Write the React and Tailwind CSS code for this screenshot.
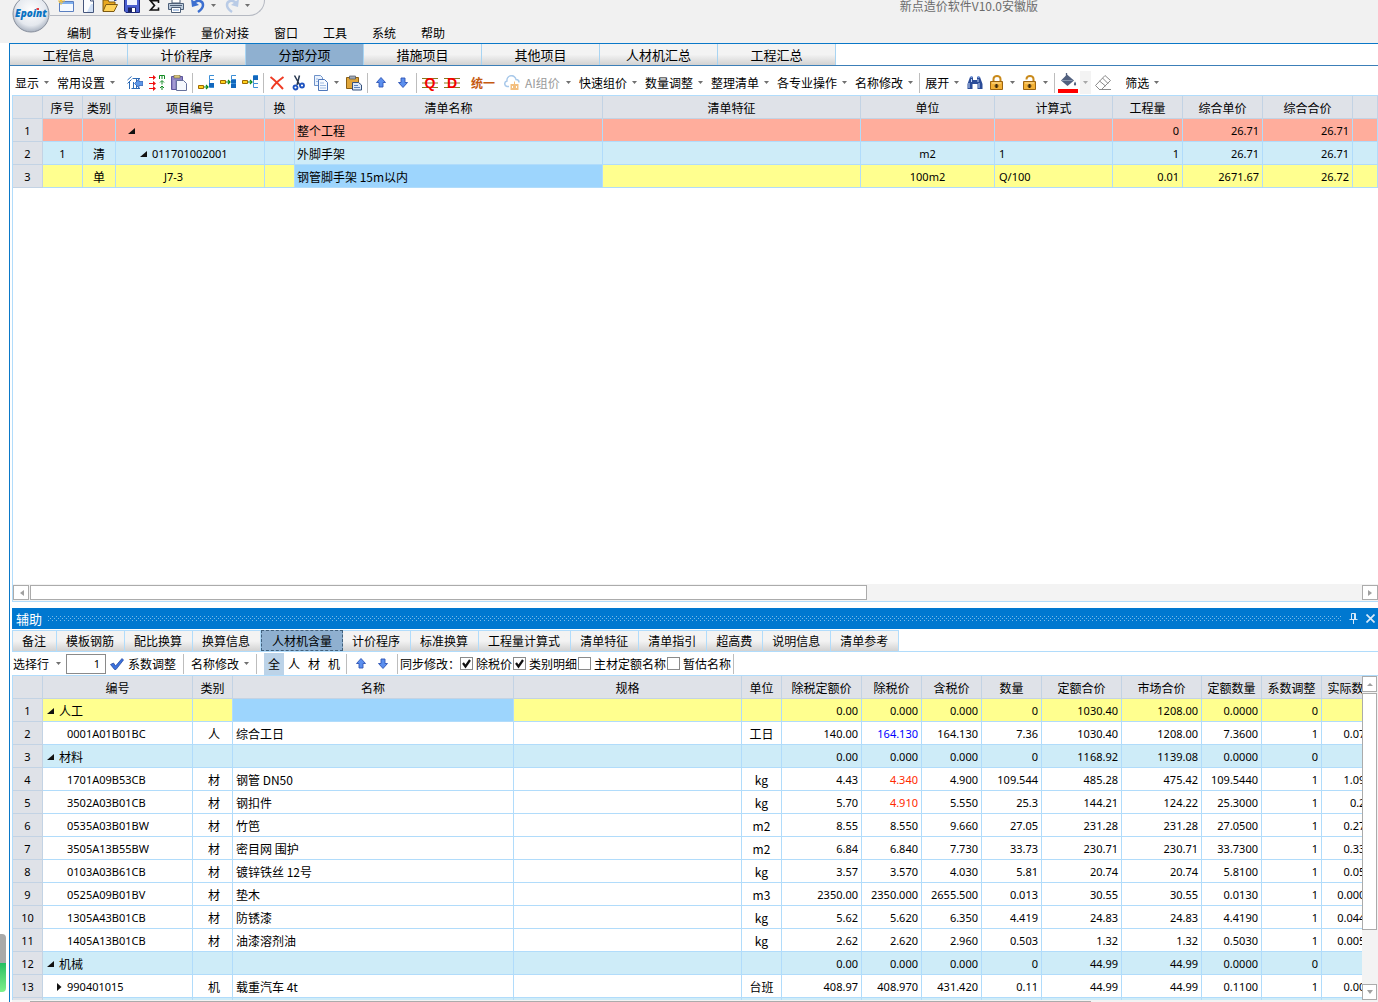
import React from "react";
import clsx from "clsx";

const MENUS = ["编制", "各专业操作", "量价对接", "窗口", "工具", "系统", "帮助"];

const MAIN_TABS = ["工程信息", "计价程序", "分部分项", "措施项目", "其他项目", "人材机汇总", "工程汇总"];

const DETAIL_TABS = [
    "备注", "模板钢筋", "配比换算", "换算信息", "人材机含量", "计价程序", "标准换算",
    "工程量计算式", "清单特征", "清单指引", "超高费", "说明信息", "清单参考",
];

const BILL_COLUMNS = [
    { title: "", width: "w-[30px]" },
    { title: "序号", width: "w-[40px]" },
    { title: "类别", width: "w-[33px]" },
    { title: "项目编号", width: "w-[149px]" },
    { title: "换", width: "w-[30px]" },
    { title: "清单名称", width: "w-[308px]" },
    { title: "清单特征", width: "w-[258px]" },
    { title: "单位", width: "w-[134px]" },
    { title: "计算式", width: "w-[118px]" },
    { title: "工程量", width: "w-[70px]" },
    { title: "综合单价", width: "w-[80px]" },
    { title: "综合合价", width: "w-[90px]" },
    { title: "", width: "" },
];

const BILL_ROWS = [
    { no: "", type: "", code: "", level: 1, name: "整个工程", unit: "", formula: "", qty: "0", price: "26.71", total: "26.71", bg: "bg-[#ffad9c]" },
    { no: "1", type: "清", code: "011701002001", level: 2, name: "外脚手架", unit: "m2", formula: "1", qty: "1", price: "26.71", total: "26.71", bg: "bg-[#ceecf8]" },
    { no: "", type: "单", code: "J7-3", level: 3, name: "钢管脚手架 15m以内", unit: "100m2", formula: "Q/100", qty: "0.01", price: "2671.67", total: "26.72", bg: "bg-[#ffff8f]", selected: true },
];

const RES_COLUMNS = [
    { title: "", width: "w-[30px]" },
    { title: "编号", width: "w-[150px]" },
    { title: "类别", width: "w-[40px]" },
    { title: "名称", width: "w-[281px]" },
    { title: "规格", width: "" },
    { title: "单位", width: "w-[40px]" },
    { title: "除税定额价", width: "w-[80px]" },
    { title: "除税价", width: "w-[60px]" },
    { title: "含税价", width: "w-[60px]" },
    { title: "数量", width: "w-[60px]" },
    { title: "定额合价", width: "w-[80px]" },
    { title: "市场合价", width: "w-[80px]" },
    { title: "定额数量", width: "w-[60px]" },
    { title: "系数调整", width: "w-[60px]" },
    { title: "实际数量", width: "w-[60px]" },
];

const RES_ROWS = [
    { group: true, code: "人工", v: ["0.00", "0.000", "0.000", "0", "1030.40", "1208.00", "0.0000", "0", ""], bg: "bg-[#ffff8f]", selected: true },
    { code: "0001A01B01BC", type: "人", name: "综合工日", unit: "工日", v: ["140.00", "164.130", "164.130", "7.36", "1030.40", "1208.00", "7.3600", "1", "0.0736"], mark: "text-[#0000ff]" },
    { group: true, code: "材料", v: ["0.00", "0.000", "0.000", "0", "1168.92", "1139.08", "0.0000", "0", ""], bg: "bg-[#ceecf8]" },
    { code: "1701A09B53CB", type: "材", name: "钢管 DN50", unit: "kg", v: ["4.43", "4.340", "4.900", "109.544", "485.28", "475.42", "109.5440", "1", "1.0954"], mark: "text-[#ff2a00]" },
    { code: "3502A03B01CB", type: "材", name: "钢扣件", unit: "kg", v: ["5.70", "4.910", "5.550", "25.3", "144.21", "124.22", "25.3000", "1", "0.253"], mark: "text-[#ff2a00]" },
    { code: "0535A03B01BW", type: "材", name: "竹笆", unit: "m2", v: ["8.55", "8.550", "9.660", "27.05", "231.28", "231.28", "27.0500", "1", "0.2705"] },
    { code: "3505A13B55BW", type: "材", name: "密目网 围护", unit: "m2", v: ["6.84", "6.840", "7.730", "33.73", "230.71", "230.71", "33.7300", "1", "0.3373"] },
    { code: "0103A03B61CB", type: "材", name: "镀锌铁丝 12号", unit: "kg", v: ["3.57", "3.570", "4.030", "5.81", "20.74", "20.74", "5.8100", "1", "0.0581"] },
    { code: "0525A09B01BV", type: "材", name: "垫木", unit: "m3", v: ["2350.00", "2350.000", "2655.500", "0.013", "30.55", "30.55", "0.0130", "1", "0.00013"] },
    { code: "1305A43B01CB", type: "材", name: "防锈漆", unit: "kg", v: ["5.62", "5.620", "6.350", "4.419", "24.83", "24.83", "4.4190", "1", "0.04419"] },
    { code: "1405A13B01CB", type: "材", name: "油漆溶剂油", unit: "kg", v: ["2.62", "2.620", "2.960", "0.503", "1.32", "1.32", "0.5030", "1", "0.00503"] },
    { group: true, code: "机械", v: ["0.00", "0.000", "0.000", "0", "44.99", "44.99", "0.0000", "0", ""], bg: "bg-[#ceecf8]" },
    { code: "990401015", type: "机", name: "载重汽车 4t", unit: "台班", closed: true, v: ["408.97", "408.970", "431.420", "0.11", "44.99", "44.99", "0.1100", "1", "0.0011"] },
];

/* ---------- icons ---------- */

const Icon = ({ children }) => (
    <svg viewBox="0 0 16 16" className="block h-4 w-4 shrink-0" fill="none" aria-hidden="true">
        {children}
    </svg>
);

const Caret = ({ className = "text-[#707070]" }) => (
    <svg viewBox="0 0 5 3" className={clsx("block h-[3px] w-[5px] shrink-0", className)} aria-hidden="true">
        <path d="M0 0h5L2.5 3z" fill="currentColor" />
    </svg>
);

const NewWindowIcon = () => (
    <Icon>
        <path d="M1.500 4.500h14v10h-14z" fill="#f4f9ff" stroke="#5a7fc0" />
        <path d="M2 5h13v2H2z" fill="#7fb0ee" />
        <path d="M3 0v8M0 4h7M1 2l4 4M5 2L1 6" stroke="#f5c23c" />
    </Icon>
);

const NewFileIcon = () => (
    <Icon>
        <path d="M3.500 .5h7l3 3.500v11.500h-10z" fill="#fbfdff" stroke="#45567c" />
        <path d="M10.500 1v3h3" stroke="#45567c" />
        <path d="M11 7l2 0v8H7z" fill="#cfdff5" />
    </Icon>
);

const OpenIcon = () => (
    <Icon>
        <path d="M1 14V3h5l1 2h6v3" fill="#e9a820" stroke="#7d5a12" />
        <path d="M1 14.500L4 7.500h11.500L12 14.500z" fill="#ffd35a" stroke="#7d5a12" />
        <path d="M9 2.500c2-2 4-1 5 1l1-2M14 3.500h-2" stroke="#2c4c9a" />
    </Icon>
);

const SaveIcon = () => (
    <Icon>
        <path d="M.5 1.500h15v14H2l-1.500-1.500z" fill="#4a5fd0" stroke="#1d2878" />
        <path d="M3 1h10v7H3z" fill="#eef3ff" />
        <path d="M4 10.500h8V15H4z" fill="#1b2360" />
        <path d="M8 11h3v4H8z" fill="#fff" />
    </Icon>
);

const SumIcon = () => (
    <Icon>
        <path d="M12.500 6V3.800H4.500L8.500 8.500l-4 4.500h8v-2.500" stroke="#111" strokeWidth="1.600" />
    </Icon>
);

const PrintIcon = () => (
    <Icon>
        <path d="M4 1h8v5H4z" fill="#fff" stroke="#4d5f78" />
        <path d="M.5 6.500h15v6H.5z" fill="#bccbdc" stroke="#4d5f78" />
        <path d="M2 8.500h12" stroke="#4d5f78" />
        <path d="M3.500 10.500h9v5h-9z" fill="#fff" stroke="#4d5f78" />
        <path d="M5 13h6" stroke="#6d95d0" />
    </Icon>
);

const UndoIcon = ({ light }) => (
    <Icon>
        <g transform={light ? "translate(16 0) scale(-1 1)" : undefined}>
            <path d="M4 6c4-4 9-2 9 2 0 3-2 5-5 7" stroke={light ? "#b9cbe6" : "#3c6fd0"} strokeWidth="2.500" />
            <path d="M1 2l1 8 7-2z" fill={light ? "#b9cbe6" : "#3c6fd0"} />
        </g>
    </Icon>
);

const FeeIcon = () => (
    <Icon>
        <path d="M4.500 1.500L.5 5M4.500 4.500L.5 8.500M2.500 7v7M5.500 3.500H13M9.500 4v9.500M6.500 7v6.500M4.500 13.500H13" stroke="#2e6bb5" />
        <path d="M16 6.500h-4V4L7.500 8.500l4.500 4.500v-2.500h4z" fill="#5f98e8" stroke="#2457ae" strokeWidth=".7" />
    </Icon>
);

const SwapIcon = () => (
    <Icon>
        <path d="M0 2.500h5M0 8.500h5M0 13.500h5" stroke="#f01010" />
        <path d="M4 0l3 2.500L4 5zM4 6l3 2.500L4 11zM4 11l3 2.500L4 16z" fill="#f01010" />
        <path d="M10.500 4V.5h5V4M13 .5V4M13 6v3.500M13 11.500V15M11 7.500l2-2 2 2M11 13l2-2 2 2" stroke="#118a22" />
    </Icon>
);

const ClipboardIcon = () => (
    <Icon>
        <path d="M.5 1.500h11v13H.5z" fill="#8b83c4" stroke="#5d569c" />
        <path d="M3 0h6v3H3z" fill="#d9c67c" stroke="#6c6248" strokeWidth=".6" />
        <path d="M3 5v9" stroke="#b9b3e0" />
        <path d="M5.500 5.500h7l3 3v7h-10z" fill="#f5f8fd" stroke="#66719c" />
    </Icon>
);

const InsertIcon = ({ pos }) => (
    <Icon>
        <path
            d={pos === 0 ? "M.5 10.500h5v3h-5z" : "M.5 5.500h5v3h-5z"}
            fill="#ffd21c"
            stroke="#a06a00"
        />
        <path d={pos === 0 ? "M6 12h4M8 10l2 2-2 2" : "M6 7h4M8 5l2 2-2 2"} stroke="#0b8a1c" strokeWidth="1.200" />
        <path d="M16 .5h-4.500v4H16M11.500 4.500v4H16M11.500 8.500v4H16" stroke="#3d8fd6" />
        <path
            d={pos === 0 ? "M11 8h5v4h-5z" : pos === 1 ? "M11 5h5v3h-5zM11 9h5v4h-5z" : "M11 1h5v4h-5z"}
            fill="#1267bd"
        />
    </Icon>
);

const DeleteIcon = () => (
    <Icon>
        <path d="M1.500 2c4 3 8 7 12.500 12M14.500 2C9 6 5 9 2.500 14" stroke="#ef3b24" strokeWidth="2" />
    </Icon>
);

const CutIcon = () => (
    <Icon>
        <path d="M3.500 .5l5.500 10M8.500 .5L6 10" stroke="#27374f" strokeWidth="1.500" />
        <circle cx="4.500" cy="12.500" r="2" stroke="#1e53c0" strokeWidth="1.800" />
        <circle cx="11" cy="10.500" r="2" stroke="#1e53c0" strokeWidth="1.800" />
    </Icon>
);

const CopyIcon = () => (
    <Icon>
        <path d="M1.500 .5h6l2 2v8h-8z" fill="#eaf2fd" stroke="#6f92c8" />
        <path d="M5.500 4.500h6l3 3v8h-9z" fill="#f5f9ff" stroke="#4f78bb" />
        <path d="M7 8h4M7 10.500h6M7 13h6M3 4h2M3 6.500h2" stroke="#9fbbe2" />
    </Icon>
);

const PasteIcon = () => (
    <Icon>
        <path d="M.5 2.500h12v11H.5z" fill="#e0a63a" stroke="#8a5f15" />
        <path d="M3.500 1h6v3h-6z" fill="#9fa8b5" stroke="#4e5560" strokeWidth=".7" />
        <path d="M6.500 7.500h6l3 2.500v5h-9z" fill="#dfeaf8" stroke="#35507c" />
        <path d="M8 10.500h4M8 12.500h6" stroke="#5e85bd" />
    </Icon>
);

const ArrowIcon = ({ down }) => (
    <Icon>
        <path
            d={down ? "M8 12.500L3.500 7.500H6V3h4v4.500h2.500z" : "M8 2.500L3.500 7.500H6V12h4V7.500h2.500z"}
            fill="#5b8fee"
            stroke="#2f55b4"
            strokeWidth=".9"
        />
    </Icon>
);

const LetterIcon = ({ letter }) => (
    <Icon>
        <path d="M0 3.500h16M0 8h16M0 12.500h16" stroke="#857a1e" strokeWidth="1.200" />
        <text x="8" y="13" textAnchor="middle" fontFamily="Liberation Sans, sans-serif" fontWeight="700" fontSize="14" fill="#f50000">
            {letter}
        </text>
    </Icon>
);

const CloudIcon = () => (
    <Icon>
        <path d="M5 11.500H3a2.800 2.800 0 010-5.500A4.500 4.500 0 0112 4.500c2 0 3 1.500 3 3" stroke="#a9c9ea" strokeWidth="1.500" />
        <path d="M6.500 9h8v6h-8z" fill="#f3bf80" />
        <path d="M10.500 6.500V9" stroke="#f3bf80" />
        <path d="M8.500 11v2M12.500 11v2" stroke="#fff" />
    </Icon>
);

const BinocularsIcon = () => (
    <Icon>
        <path d="M3 2h3v3h4V2h3l2.500 7v5h-5V9h-5v5h-5V9z" fill="#2b4c98" />
        <path d="M3.500 1h2v2h-2zM10.500 1h2v2h-2z" fill="#7d9bd8" />
        <path d="M2 8v5M12 8v5M4.500 4v3M11 4v3" stroke="#c5d6f5" />
    </Icon>
);

const LockIcon = ({ open }) => (
    <Icon>
        <path d={open ? "M4.500 4.500V4a3.500 3 0 017 0v3" : "M4.500 7V4a3.500 3 0 017 0v3"} stroke="#c98a1b" strokeWidth="2" />
        <path d="M1.500 6.500h12v8h-12z" fill="#f3b136" stroke="#9c6410" />
        <path d="M3 8h9" stroke="#ffe09a" />
        <path d="M6.500 9h2v1.500h1v1h-1V13h-2v-1.500h-1v-1h1z" fill="#3b2a10" />
    </Icon>
);

const EraserIcon = () => (
    <Icon>
        <path d="M10 .5l5.500 5-9 9h-2l-4-4z" stroke="#8a8a8a" />
        <path d="M4.500 6l6 5M7.500 3l5.500 5.500M4 14.500h12" stroke="#8a8a8a" />
    </Icon>
);

const BucketIcon = () => (
    <svg viewBox="0 0 20 20" className="block h-5 w-5" fill="none" aria-hidden="true">
        <path d="M9 1.500L3 7.500l6.500 5.500 6.500-5.500z" fill="#52617f" />
        <path d="M8.500 0v6" stroke="#52617f" strokeWidth="1.300" />
        <path d="M3.500 7.500h11" stroke="#8b98b1" />
        <path d="M17 8.500c1.500 2 1.500 4 0 4s-1.500-2 0-4z" fill="#52617f" />
        <path d="M0 16h20v4H0z" fill="#f00" />
    </svg>
);

const CheckMark = () => (
    <Icon>
        <path d="M1.500 8.500L4.500 7l2 3L13 2.500 14.500 4 7 13.500H5.500z" fill="#3c72dd" stroke="#1c3f9a" strokeWidth=".7" />
    </Icon>
);

const Logo = () => (
    <svg viewBox="0 0 38 34" className="block h-[34px] w-[38px]" aria-label="Epoint">
        <defs>
            <radialGradient id="ball" cx="50%" cy="40%" r="60%">
                <stop offset="0" stopColor="#ffffff" />
                <stop offset=".7" stopColor="#e4e8ee" />
                <stop offset="1" stopColor="#a9b2c0" />
            </radialGradient>
        </defs>
        <circle cx="19" cy="14" r="18" fill="url(#ball)" stroke="#8a919e" />
        <text x="19" y="17" textAnchor="middle" fontFamily="Open Sans, sans-serif" fontStyle="italic" fontWeight="800" fontSize="10" fill="#0a73c2">
            Epoint
        </text>
        <path d="M24.500 9h2.500" stroke="#e0282e" strokeWidth="1.800" />
    </svg>
);

/* ---------- small controls ---------- */

const IconButton = ({ label, children }) => (
    <button type="button" aria-label={label} className="mr-[6px] shrink-0">
        {children}
    </button>
);

const MenuButton = ({ children, label, className = "mr-2" }) => (
    <button type="button" aria-label={label} className={clsx("flex shrink-0 items-center gap-[5px] whitespace-nowrap", className)}>
        {children}
        <Caret />
    </button>
);

const Separator = ({ className = "-ml-px mr-[5px]" }) => (
    <div className={clsx("h-5 w-px shrink-0 bg-[#bdbdbd]", className)} />
);

const SyncOption = ({ label, checked, className }) => (
    <label className={clsx("flex shrink-0 items-center gap-[3px]", className)}>
        <span className="grid h-[13px] w-[13px]">
            <input
                type="checkbox"
                defaultChecked={checked}
                className="peer col-start-1 row-start-1 h-[13px] w-[13px] appearance-none border border-[#8a8a8a] bg-white"
            />
            <svg viewBox="0 0 13 13" className="pointer-events-none invisible col-start-1 row-start-1 h-[13px] w-[13px] peer-checked:visible" fill="none">
                <path d="M3 6l2.500 3.500L10 3" stroke="#111" strokeWidth="2.200" />
            </svg>
        </span>
        {label}
    </label>
);

const Expander = ({ closed }) => (
    <svg viewBox="0 0 8 8" className="block h-2 w-2 shrink-0" aria-hidden="true">
        <path d={closed ? "M2 0l4.500 4L2 8z" : "M7 1v6H0z"} fill="#111" />
    </svg>
);

const ScrollButton = ({ dir, className }) => {
    const paths = {
        left: "M7 1v6L3 4z",
        right: "M2 1v6l4-3z",
        up: "M1 6h6L4 3z",
        down: "M1 2h6L4 6z",
    };
    return (
        <button type="button" aria-label={dir} className={clsx("flex shrink-0 items-center justify-center border border-[#ababab] bg-white", className)}>
            <svg viewBox="0 0 8 8" className="h-2 w-2">
                <path d={paths[dir]} fill="#a0a0a0" />
            </svg>
        </button>
    );
};

const Cell = ({ className, children }) => (
    <td className={clsx("h-[23px] overflow-hidden border-r border-b border-[#b1dcfb] pt-[2px] pb-0 whitespace-nowrap", className)}>
        {children}
    </td>
);

const LATIN = "font-['Noto_Sans','Noto_Sans_CJK_SC',sans-serif] text-[11px]";

const RowNumber = ({ children }) => (
    <th scope="row" className={clsx("h-[23px] border-r border-b border-[#c3d3e4] bg-[#dfe2e8] px-0 pt-[2px] pb-0 text-center font-normal", LATIN)}>
        {children}
    </th>
);

const GridHead = ({ columns }) => (
    <thead>
        <tr>
            {columns.map((col, i) => (
                <th
                    key={i}
                    scope="col"
                    className={clsx("h-[23px] overflow-hidden border-r border-b border-[#c3d3e4] bg-[#dfe2e8] px-0 pt-[2px] pb-0 text-center font-normal whitespace-nowrap", col.width)}
                >
                    {col.title}
                </th>
            ))}
        </tr>
    </thead>
);

/* ---------- page sections ---------- */

const Header = () => (
    <header className="flex h-[43px] shrink-0 bg-[#f1f1f1] pl-3">
        <Logo />
        <div className="flex flex-1 flex-col">
            <div className="flex h-4 justify-between">
                <div className="flex h-4 w-[215px] items-end rounded-br-2xl border-r border-b border-[#b5b9c2] pb-[2px] pl-2">
                    <IconButton label="新建窗口"><NewWindowIcon /></IconButton>
                    <IconButton label="新建"><NewFileIcon /></IconButton>
                    <IconButton label="打开"><OpenIcon /></IconButton>
                    <IconButton label="保存"><SaveIcon /></IconButton>
                    <IconButton label="合计"><SumIcon /></IconButton>
                    <IconButton label="打印"><PrintIcon /></IconButton>
                    <MenuButton label="撤销"><UndoIcon /></MenuButton>
                    <MenuButton label="恢复"><UndoIcon light /></MenuButton>
                </div>
                <h1 className="mr-[340px] text-[12px] leading-3 whitespace-nowrap text-[#6b6b6b]">新点造价软件V10.0安徽版</h1>
            </div>
            <nav className="flex flex-1 items-center gap-[25px] pt-[7px] pl-[17px]">
                {MENUS.map((menu) => (
                    <button key={menu} type="button">{menu}</button>
                ))}
            </nav>
        </div>
    </header>
);

const MainTabs = () => (
    <div className="flex h-[23px] shrink-0 border-t border-b border-t-[#0a78c8] border-b-[#3c7fb8]">
        {MAIN_TABS.map((tab, i) => (
            <button
                key={tab}
                type="button"
                className={clsx(
                    "w-[118px] border-r border-[#a8d4f2] text-[13px] leading-5",
                    i === 2 ? "bg-[#8fb0d0]" : "bg-linear-to-b from-[#f3f3f3] from-50% to-[#d2d2d2]"
                )}
            >
                {tab}
            </button>
        ))}
    </div>
);

const Toolbar = () => (
    <div className="flex h-[29px] shrink-0 items-center pt-1 pl-[5px]">
        <MenuButton>显示</MenuButton>
        <MenuButton className="mr-3">常用设置</MenuButton>
        <IconButton label="取费"><FeeIcon /></IconButton>
        <IconButton label="单位换算"><SwapIcon /></IconButton>
        <IconButton label="剪贴板"><ClipboardIcon /></IconButton>
        <Separator />
        <IconButton label="插入子项"><InsertIcon pos={0} /></IconButton>
        <IconButton label="插入同级"><InsertIcon pos={1} /></IconButton>
        <IconButton label="插入上级"><InsertIcon pos={2} /></IconButton>
        <Separator />
        <IconButton label="删除"><DeleteIcon /></IconButton>
        <IconButton label="剪切"><CutIcon /></IconButton>
        <MenuButton label="复制" className="mr-[7px]"><CopyIcon /></MenuButton>
        <IconButton label="粘贴"><PasteIcon /></IconButton>
        <Separator />
        <IconButton label="上移"><ArrowIcon /></IconButton>
        <IconButton label="下移"><ArrowIcon down /></IconButton>
        <Separator />
        <IconButton label="清单"><LetterIcon letter="Q" /></IconButton>
        <IconButton label="定额"><LetterIcon letter="D" /></IconButton>
        <button type="button" className="mr-[9px] ml-[5px] shrink-0 font-bold text-[#c55a11]">统一</button>
        <MenuButton>
            <CloudIcon />
            <span className="w-9 text-left text-[#9a9a9a]">AI组价</span>
        </MenuButton>
        <MenuButton>快速组价</MenuButton>
        <MenuButton>数量调整</MenuButton>
        <MenuButton>整理清单</MenuButton>
        <MenuButton>各专业操作</MenuButton>
        <MenuButton>名称修改</MenuButton>
        <Separator className="-ml-[2px] mr-[5px]" />
        <MenuButton className="mr-2">展开</MenuButton>
        <IconButton label="查找"><BinocularsIcon /></IconButton>
        <MenuButton label="锁定" className="mr-[7px]"><LockIcon /></MenuButton>
        <MenuButton label="解锁" className="mr-[7px]"><LockIcon open /></MenuButton>
        <Separator className="-ml-px mr-[3px]" />
        <button type="button" aria-label="填充颜色" className="mr-[2px] shrink-0"><BucketIcon /></button>
        <button type="button" aria-label="更多颜色" className="mr-1 flex h-[23px] w-[11px] shrink-0 items-center justify-center bg-[#f3f3f3]">
            <Caret className="text-[#a8a8a8]" />
        </button>
        <button type="button" aria-label="清除颜色" className="mr-[14px] shrink-0"><EraserIcon /></button>
        <MenuButton>筛选</MenuButton>
    </div>
);

const BillGrid = () => (
    <table className="w-full table-fixed border-separate border-spacing-0">
        <GridHead columns={BILL_COLUMNS} />
        <tbody>
            {BILL_ROWS.map((row, i) => (
                <tr key={i} className={row.bg}>
                    <RowNumber>{i + 1}</RowNumber>
                    <Cell className={clsx("text-center", LATIN)}>{row.no}</Cell>
                    <Cell className="text-center">{row.type}</Cell>
                    <Cell className={LATIN}>
                        <div
                            className={clsx(
                                "flex items-center gap-1",
                                row.level === 1 && "pl-3",
                                row.level === 2 && "pl-6",
                                row.level === 3 && "pl-12"
                            )}
                        >
                            {row.level < 3 && <Expander />}
                            {row.code}
                        </div>
                    </Cell>
                    <Cell />
                    <Cell className={clsx("pl-[2px]", row.selected && "bg-[#9dd5fd]")}>{row.name}</Cell>
                    <Cell />
                    <Cell className={clsx("text-center", LATIN)}>{row.unit}</Cell>
                    <Cell className={clsx("pl-1", LATIN)}>{row.formula}</Cell>
                    <Cell className={clsx("pr-[3px] text-right", LATIN)}>{row.qty}</Cell>
                    <Cell className={clsx("pr-[3px] text-right", LATIN)}>{row.price}</Cell>
                    <Cell className={clsx("pr-[3px] text-right", LATIN)}>{row.total}</Cell>
                    <Cell />
                </tr>
            ))}
        </tbody>
    </table>
);

const DetailTitle = () => (
    <div className="flex h-[21px] shrink-0 items-center bg-[#0078d0] pr-[3px] pl-1 text-white">
        <h2 className="text-[13px]">辅助</h2>
        <svg className="ml-[6px] h-[5px] flex-1" aria-hidden="true">
            <defs>
                <pattern id="grip" width="4" height="4" patternUnits="userSpaceOnUse">
                    <path d="M0 0h1v1H0zM2 2h1v1H2z" fill="#7dbbe8" />
                </pattern>
            </defs>
            <rect width="100%" height="5" fill="url(#grip)" />
        </svg>
        <button type="button" aria-label="固定" className="ml-[7px]">
            <svg viewBox="0 0 9 11" className="block h-[11px] w-[9px]" fill="none">
                <path d="M2.500 6V.5h4V6M5.500 .5V6M.5 6.500h8M4.500 7v4" stroke="#d6eafa" />
            </svg>
        </button>
        <button type="button" aria-label="关闭" className="ml-2">
            <svg viewBox="0 0 9 9" className="block h-[9px] w-[9px]" fill="none">
                <path d="M.5 .5l8 8M8.500 .5l-8 8" stroke="#d6eafa" strokeWidth="1.700" />
            </svg>
        </button>
    </div>
);

const DetailTabs = () => (
    <div className="mt-px flex h-[22px] shrink-0 border-b border-l border-[#b1dcfb]">
        {DETAIL_TABS.map((tab, i) => (
            <button
                key={tab}
                type="button"
                className={clsx(
                    "shrink-0 border-t leading-5",
                    i === 4
                        ? "border border-dashed border-[#40607c] bg-[#8fb0d0] px-[10px]"
                        : "border-r border-[#b1dcfb] bg-linear-to-b from-[#f3f3f3] from-50% to-[#d2d2d2] pr-[10px] pl-[9px]"
                )}
            >
                {tab}
            </button>
        ))}
    </div>
);

const DetailToolbar = () => (
    <div className="flex h-[23px] shrink-0 items-center pl-px whitespace-nowrap">
        <label htmlFor="row-count" className="mr-[7px]">选择行</label>
        <Caret />
        <input
            id="row-count"
            type="text"
            defaultValue="1"
            className={clsx("ml-[5px] h-5 w-10 border border-[#8a8a8a] bg-white pr-[5px] text-right", LATIN)}
        />
        <button type="button" className="mr-[7px] ml-[3px] flex items-center gap-[3px]">
            <CheckMark />
            系数调整
        </button>
        <Separator className="mr-[7px]" />
        <MenuButton className="mr-[7px]">名称修改</MenuButton>
        <Separator className="mr-[7px]" />
        <button type="button" className="h-[22px] w-5 bg-[#bcd3e8]">全</button>
        <button type="button" className="w-5">人</button>
        <button type="button" className="w-5">材</button>
        <button type="button" className="w-5">机</button>
        <Separator className="mr-[6px] ml-[2px]" />
        <IconButton label="上移"><ArrowIcon /></IconButton>
        <IconButton label="下移"><ArrowIcon down /></IconButton>
        <Separator className="mr-[2px]" />
        同步修改：
        <SyncOption label="除税价" checked className="mr-px" />
        <SyncOption label="类别明细" checked className="mr-px" />
        <SyncOption label="主材定额名称" className="mr-px" />
        <SyncOption label="暂估名称" />
        <Separator className="ml-[2px]" />
    </div>
);

const ResourceGrid = () => (
    <table className="w-[calc(100%+20px)] table-fixed border-separate border-spacing-0">
        <GridHead columns={RES_COLUMNS} />
        <tbody>
            {RES_ROWS.map((row, i) => (
                <tr key={i} className={row.bg || "bg-white"}>
                    <RowNumber>{i + 1}</RowNumber>
                    <Cell className={row.group ? "" : LATIN}>
                        <div className={clsx("flex items-center gap-1", row.group ? "pl-1" : row.closed ? "pl-3" : "pl-6")}>
                            {(row.group || row.closed) && <Expander closed={row.closed} />}
                            {row.code}
                        </div>
                    </Cell>
                    <Cell className="pl-[3px] text-center">{row.type}</Cell>
                    <Cell className={clsx("pl-[3px]", row.selected && "bg-[#9dd5fd]")}>{row.name}</Cell>
                    <Cell />
                    <Cell className="text-center">{row.unit}</Cell>
                    {row.v.map((value, j) => (
                        <Cell key={j} className={clsx("pr-[3px] text-right", LATIN, j === 1 && row.mark)}>
                            {value}
                        </Cell>
                    ))}
                </tr>
            ))}
            <tr className="bg-[#ceecf8]">
                <RowNumber />
                {RES_COLUMNS.slice(1).map((col, i) => (
                    <Cell key={i} />
                ))}
            </tr>
        </tbody>
    </table>
);

const App = () => {
    return (
        <div className="flex h-screen flex-col overflow-hidden bg-white font-['Noto_Sans_CJK_SC',sans-serif] text-[12px] leading-4 text-black">
            <Header />
            <div className="flex min-h-0 flex-1">
                {/* Left gutter with the level meter */}
                <div className="flex w-[9px] shrink-0 flex-col justify-end pb-[10px]">
                    <div className="h-[29px] w-[6px] rounded-tr bg-[#a9a9a9]" />
                    <div className="h-[29px] w-[6px] rounded-br bg-linear-to-b from-[#1fbf62] to-[#7df08a]" />
                </div>

                <main className="flex min-w-0 flex-1 flex-col border-l border-[#0a78c8]">
                    <MainTabs />
                    <Toolbar />

                    {/* Bill of quantities */}
                    <section className="ml-[2px] flex min-h-0 flex-1 flex-col border-t border-b border-l border-[#b1dcfb]">
                        <div className="min-h-0 flex-1 overflow-hidden">
                            <BillGrid />
                        </div>
                        <div className="flex h-[17px] shrink-0 items-center gap-px bg-[#f3f3f3]">
                            <ScrollButton dir="left" className="h-[15px] w-4" />
                            <div className="h-[15px] w-[837px] border border-[#ababab] bg-white" />
                            <ScrollButton dir="right" className="ml-auto h-[15px] w-4" />
                        </div>
                    </section>

                    {/* Resource details */}
                    <section className="mt-[6px] ml-[2px] flex h-[394px] shrink-0 flex-col">
                        <DetailTitle />
                        <DetailTabs />
                        <DetailToolbar />
                        <div className="flex min-h-0 flex-1 border-t border-l border-[#b1dcfb]">
                            <div className="min-w-0 flex-1 overflow-hidden">
                                <ResourceGrid />
                            </div>
                            <div className="flex w-4 shrink-0 flex-col gap-px bg-[#f3f3f3]">
                                <ScrollButton dir="up" className="h-4 w-[15px]" />
                                <div className="h-[237px] w-[15px] border border-[#ababab] bg-white" />
                                <ScrollButton dir="down" className="mt-auto h-4 w-[15px]" />
                            </div>
                        </div>
                        <div className="h-[2px] shrink-0 bg-[#f3f3f3] pt-px pl-[18px]">
                            <div className="h-px w-[1061px] bg-[#ababab]" />
                        </div>
                    </section>
                </main>
            </div>
        </div>
    );
};

export default App;
